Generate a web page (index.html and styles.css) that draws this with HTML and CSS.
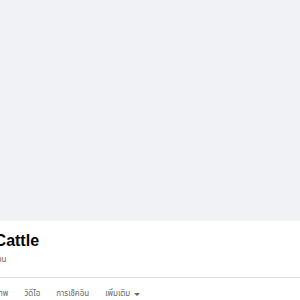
FILE: index.html
```html
<!DOCTYPE html>
<html lang="th">
<head>
<meta charset="utf-8">
<link rel="stylesheet" href="styles.css">
</head>
<body>
<div class="page">
  <div class="cover"></div>
  <div class="head">
    <h1 class="title">Farm Cattle</h1>
    <div class="sub">ผู้ติดตาม 1.2 พัน คน</div>
  </div>
  <div class="divider"></div>
  <nav class="tabs">
    <span class="tab">รูปภาพ</span>
    <span class="tab">วิดีโอ</span>
    <span class="tab">การเช็คอิน</span>
    <span class="tab more">เพิ่มเติม <span class="caret"></span></span>
  </nav>
</div>
</body>
</html>
```
FILE: styles.css
```css
html, body {
  margin: 0;
  padding: 0;
  background: #ffffff;
  overflow: hidden;
}
.page {
  width: 300px;
  height: 300px;
  font-family: "Liberation Sans", "Noto Sans", "Noto Sans Thai", sans-serif;
  color: #050505;
}
.cover {
  height: 221px;
  background: #f0f2f5;
}
.head {
  padding-top: 10px;
  height: 46px;
  box-sizing: border-box;
  display: flex;
  flex-direction: column;
  align-items: flex-start;
}
.title {
  margin: 0 0 0 -49px;
  font-size: 16px;
  line-height: 19px;
  font-weight: 700;
  white-space: nowrap;
}
.sub {
  margin: 5px 0 0 -60px;
  font-size: 8px;
  line-height: 10px;
  color: #65676b;
  white-space: nowrap;
}
.divider {
  height: 1px;
  background: #dadde1;
  margin-top: 10px;
}
.tabs {
  display: flex;
  gap: 16px;
  margin-left: -14px;
  padding-top: 10px;
  font-size: 8px;
  line-height: 12px;
  color: #65676b;
  white-space: nowrap;
}
.tab {
  display: flex;
  align-items: center;
  gap: 4px;
}
.caret {
  width: 0;
  height: 0;
  border-left: 3px solid transparent;
  border-right: 3px solid transparent;
  border-top: 3px solid #65676b;
}
```
